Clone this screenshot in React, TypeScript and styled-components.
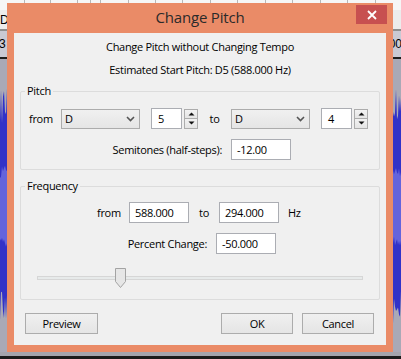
import React from "react";
import styled, { createGlobalStyle } from "styled-components";

const Global = createGlobalStyle`
  html, body { margin: 0; padding: 0; }
  body { font-family: "Open Sans", "Noto Sans", sans-serif; }
  * { box-sizing: border-box; }
`;

const UI_FONT = `"Open Sans", "Noto Sans", sans-serif`;

/* ---------- desktop / background (Audacity window behind) ---------- */
const Desktop = styled.div`
  position: relative;
  width: 401px;
  height: 359px;
  overflow: hidden;
  display: flex;
  flex-direction: column;
  background: #a9a9b6;
`;

const RulerStrip = styled.div`
  height: 10px;
  background: #f6f6f6;
`;

const GridLines = styled.svg`
  display: block;
  width: 401px;
  height: 10px;
`;

const LabelRow = styled.div<{ $bg: string; $h: number; $line: string }>`
  height: ${(p) => p.$h}px;
  background: ${(p) => p.$bg};
  border-bottom: 2px solid ${(p) => p.$line};
  display: flex;
  justify-content: space-between;
  align-items: center;
  font-family: "Liberation Sans", sans-serif;
  font-size: 12px;
  color: #000;
`;

const EdgeText = styled.span<{ $shift: number }>`
  margin-left: ${(p) => p.$shift}px;
  margin-right: ${(p) => -p.$shift}px;
`;

const TrackArea = styled.div`
  flex: 1;
  background: #a9a9b6;
`;

const WaveSvg = styled.svg`
  display: block;
  width: 401px;
  height: 100%;
`;

const BottomBar = styled.div`
  height: 7px;
  background: #a4a4ac;
  border-bottom: 3px solid #1b1b1b;
`;

/* ---------- dialog window ---------- */
const Window = styled.div`
  position: absolute;
  left: 7px;
  top: 3px;
  width: 386px;
  height: 349px;
  background: #ea8b67;
  display: flex;
  flex-direction: column;
  padding: 0 7px 7px;
`;

const TitleBar = styled.div`
  height: 30px;
  display: grid;
  grid-template-columns: 1fr auto 1fr;
  align-items: start;
`;

const Title = styled.span`
  grid-column: 2;
  margin-top: 4px;
  font-family: ${UI_FONT};
  font-size: 15px;
  line-height: 21px;
  letter-spacing: -0.2px;
  color: #2a2a2a;
`;

const CloseButton = styled.div`
  grid-column: 3;
  justify-self: end;
  margin-top: 2px;
  margin-right: -1px;
  width: 31px;
  height: 19px;
  background: #c75050;
  display: flex;
  align-items: center;
  justify-content: center;
`;

const Client = styled.div`
  flex: 1;
  background: #f0f0f0;
  display: flex;
  flex-direction: column;
  padding: 0 6px;
  font-family: ${UI_FONT};
  font-size: 11px;
  letter-spacing: -0.3px;
  color: #000;
`;

const InfoLine = styled.div<{ $top: number }>`
  margin-top: ${(p) => p.$top}px;
  height: 23px;
  line-height: 23px;
  text-align: center;
`;

const GroupBox = styled.div<{ $top: number; $bottom: number }>`
  margin-top: ${(p) => p.$top}px;
  border: 1px solid #dcdcdc;
  border-radius: 2px;
  padding-bottom: ${(p) => p.$bottom}px;
  display: flex;
  flex-direction: column;
`;

const Legend = styled.span`
  align-self: flex-start;
  margin-top: -8px;
  margin-left: 4px;
  padding: 0 2px;
  height: 14px;
  line-height: 14px;
  background: #f0f0f0;
`;

const Row = styled.div<{ $top: number; $left?: number }>`
  margin-top: ${(p) => p.$top}px;
  padding-left: ${(p) => p.$left ?? 0}px;
  display: flex;
  align-items: center;
  height: 21px;
`;

const FieldLabel = styled.span<{ $w?: number; $align?: string; $ml?: number }>`
  ${(p) => (p.$w ? `width: ${p.$w}px;` : "")}
  margin-left: ${(p) => p.$ml ?? 0}px;
  text-align: ${(p) => p.$align ?? "left"};
  flex-shrink: 0;
  white-space: nowrap;
`;

const TextBox = styled.div<{ $w: number; $ml?: number; $pl?: number }>`
  width: ${(p) => p.$w}px;
  margin-left: ${(p) => p.$ml ?? 0}px;
  height: 21px;
  line-height: 19px;
  background: #ffffff;
  border: 1px solid #abadb3;
  padding-left: ${(p) => p.$pl ?? 5}px;
  flex-shrink: 0;
`;

const Combo = styled.div<{ $ml?: number }>`
  width: 79px;
  height: 20px;
  margin-left: ${(p) => p.$ml ?? 0}px;
  background: linear-gradient(#f0f0f0, #e5e5e5);
  border: 1px solid #acacac;
  display: flex;
  align-items: center;
  justify-content: space-between;
  padding: 0 4px 0 3px;
  line-height: 18px;
  flex-shrink: 0;
`;

const Spin = styled.div<{ $ml: number }>`
  margin-left: ${(p) => p.$ml}px;
  display: flex;
  align-items: center;
  gap: 2px;
  flex-shrink: 0;
`;

const SpinButtons = styled.div`
  width: 14px;
  height: 20px;
  display: flex;
  flex-direction: column;
`;

const SpinHalf = styled.div`
  flex: 1;
  background: linear-gradient(#f2f2f2, #e4e4e4);
  border: 1px solid #acacac;
  display: flex;
  align-items: center;
  justify-content: center;
  & + & { border-top: none; }
`;

const SliderBox = styled.div`
  margin-top: 14px;
  margin-left: 16px;
  width: 326px;
  height: 20px;
  display: flex;
  align-items: center;
`;

const Track = styled.div`
  position: relative;
  width: 100%;
  height: 4px;
  background: #e7eaea;
  border: 1px solid #d6d6d6;
`;

const Thumb = styled.svg`
  position: absolute;
  top: -9px;
  display: block;
`;

const ButtonRow = styled.div`
  margin-top: 13px;
  display: flex;
  align-items: center;
  padding: 0 6px 0 5px;
`;

const Spacer = styled.div`
  flex: 1;
`;

const PushButton = styled.div<{ $w: number; $ml?: number }>`
  width: ${(p) => p.$w}px;
  margin-left: ${(p) => p.$ml ?? 0}px;
  height: 21px;
  background: linear-gradient(#f0f0f0, #e5e5e5);
  border: 1px solid #acacac;
  display: flex;
  align-items: center;
  justify-content: center;
`;

/* ---------- drawings ---------- */
function wavePath(cx: number, amp: number, seed: number, w: number) {
  let s = seed;
  const rnd = () => {
    s = (s * 16807) % 2147483647;
    return s / 2147483647;
  };
  const top: string[] = [];
  const bot: string[] = [];
  for (let x = 0; x <= w; x += 1) {
    const a1 = amp * (0.7 + 0.3 * rnd());
    const a2 = amp * (0.7 + 0.3 * rnd());
    top.push(`${x},${(cx - a1).toFixed(1)}`);
    bot.push(`${x},${(cx + a2).toFixed(1)}`);
  }
  return `M${top.join("L")}L${bot.reverse().join("L")}Z`;
}

const Chevron = () => (
  <svg width="9" height="6" viewBox="0 0 9 6">
    <path d="M1 1 L4.5 4.5 L8 1" fill="none" stroke="#555" strokeWidth="1.6" />
  </svg>
);

const Tri = ({ up }: { up: boolean }) => (
  <svg width="7" height="4" viewBox="0 0 7 4">
    <path d={up ? "M0.5 3.5 L3.5 0.5 L6.5 3.5 Z" : "M0.5 0.5 L3.5 3.5 L6.5 0.5 Z"} fill="#111" />
  </svg>
);

const SpinCtl = ({ value, ml }: { value: string; ml: number }) => (
  <Spin $ml={ml}>
    <TextBox $w={31} $pl={6}>{value}</TextBox>
    <SpinButtons>
      <SpinHalf>
        <Tri up />
      </SpinHalf>
      <SpinHalf>
        <Tri up={false} />
      </SpinHalf>
    </SpinButtons>
  </Spin>
);

const NoteCombo = ({ ml }: { ml?: number }) => (
  <Combo $ml={ml}>
    <span>D</span>
    <Chevron />
  </Combo>
);

export default function App() {
  const gridX = [24, 50, 77, 90, 100, 128, 155, 182, 210, 237, 265, 292, 320, 347, 375];
  const thumbLeft = 78;
  return (
    <>
      <Global />
      <Desktop>
        <RulerStrip>
          <GridLines viewBox="0 0 401 10">
            {gridX.map((x) => (
              <line key={x} x1={x + 0.5} y1={0} x2={x + 0.5} y2={10} stroke="#b8b8b8" strokeWidth={1} />
            ))}
          </GridLines>
        </RulerStrip>
        <LabelRow $bg="#ececec" $h={21} $line="#8e8e8e">
          <EdgeText $shift={0}>D</EdgeText>
          <EdgeText $shift={0}> </EdgeText>
        </LabelRow>
        <LabelRow $bg="#c9c9d3" $h={28} $line="#1e1e1e">
          <EdgeText $shift={-1}>3</EdgeText>
          <EdgeText $shift={1}>00</EdgeText>
        </LabelRow>
        <TrackArea>
          <WaveSvg viewBox="0 0 401 283" preserveAspectRatio="none">
            <path d={wavePath(143, 115, 12345, 401)} fill="#3232c8" />
            <path d={wavePath(143, 40, 777, 401)} fill="#6464dc" />
          </WaveSvg>
        </TrackArea>
        <BottomBar />

        <Window>
          <TitleBar>
            <Title>Change Pitch</Title>
            <CloseButton>
              <svg width="10" height="10" viewBox="0 0 10 10">
                <path d="M1 1 L9 9 M9 1 L1 9" stroke="#fff" strokeWidth="1.8" />
              </svg>
            </CloseButton>
          </TitleBar>
          <Client>
            <InfoLine $top={2}>Change Pitch without Changing Tempo</InfoLine>
            <InfoLine $top={0}>Estimated Start Pitch: D5 (588.000 Hz)</InfoLine>

            <GroupBox $top={10} $bottom={9}>
              <Legend>Pitch</Legend>
              <Row $top={10} $left={8}>
                <FieldLabel $w={32}>from</FieldLabel>
                <NoteCombo />
                <SpinCtl value="5" ml={11} />
                <FieldLabel $w={33} $align="center">to</FieldLabel>
                <NoteCombo />
                <SpinCtl value="4" ml={11} />
              </Row>
              <Row $top={10}>
                <FieldLabel $w={201} $align="right">Semitones (half-steps):</FieldLabel>
                <TextBox $w={60} $ml={9}>-12.00</TextBox>
              </Row>
            </GroupBox>

            <GroupBox $top={16} $bottom={11}>
              <Legend>Frequency</Legend>
              <Row $top={9} $left={76}>
                <FieldLabel $w={32}>from</FieldLabel>
                <TextBox $w={60}>588.000</TextBox>
                <FieldLabel $w={30} $align="center">to</FieldLabel>
                <TextBox $w={60}>294.000</TextBox>
                <FieldLabel $ml={9}>Hz</FieldLabel>
              </Row>
              <Row $top={10}>
                <FieldLabel $w={186} $align="right">Percent Change:</FieldLabel>
                <TextBox $w={60} $ml={9}>-50.000</TextBox>
              </Row>
              <SliderBox>
                <Track>
                  <Thumb width="11" height="20" viewBox="0 0 11 20" style={{ left: thumbLeft - 1 }}>
                    <path d="M0.5 0.5 H10.5 V13.5 L5.5 19.5 L0.5 13.5 Z" fill="#e6e6e6" stroke="#a3a3a3" />
                  </Thumb>
                </Track>
              </SliderBox>
            </GroupBox>

            <ButtonRow>
              <PushButton $w={73}>Preview</PushButton>
              <Spacer />
              <PushButton $w={72}>OK</PushButton>
              <PushButton $w={72} $ml={9}>Cancel</PushButton>
            </ButtonRow>
          </Client>
        </Window>
      </Desktop>
    </>
  );
}
